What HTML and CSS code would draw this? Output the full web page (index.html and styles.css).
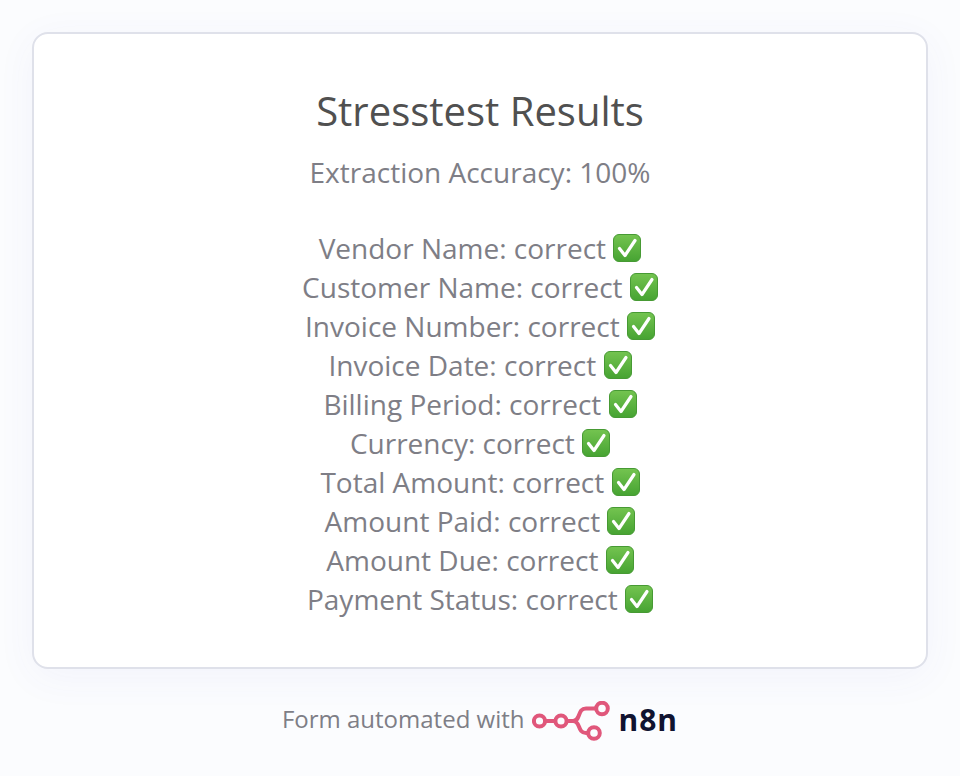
FILE: index.html
```
<!DOCTYPE html>
<html lang="en">
<head>
<meta charset="utf-8">
<title>Stresstest Results</title>
<link rel="stylesheet" href="styles.css">
</head>
<body>
<svg class="defs" width="0" height="0" aria-hidden="true">
  <defs>
    <linearGradient id="g" x1="0" y1="0" x2="0" y2="1">
      <stop offset="0" stop-color="#74c450"/>
      <stop offset="1" stop-color="#46a332"/>
    </linearGradient>
    <symbol id="check" viewBox="0 0 28 28">
      <rect x="0.5" y="0.5" width="27" height="27" rx="5.5" fill="url(#g)" stroke="#479a34"/>
      <path d="M6.5 14.5 L12 21.5 L22 6.5" fill="none" stroke="#fff" stroke-width="3.2" stroke-linecap="round" stroke-linejoin="round"/>
    </symbol>
  </defs>
</svg>
<main class="card">
  <h1 class="title">Stresstest Results</h1>
  <p class="accuracy">Extraction Accuracy: 100%</p>
  <ul class="results">
    <li>Vendor Name: correct <svg class="ok"><use href="#check"/></svg></li>
    <li>Customer Name: correct <svg class="ok"><use href="#check"/></svg></li>
    <li>Invoice Number: correct <svg class="ok"><use href="#check"/></svg></li>
    <li>Invoice Date: correct <svg class="ok"><use href="#check"/></svg></li>
    <li>Billing Period: correct <svg class="ok"><use href="#check"/></svg></li>
    <li>Currency: correct <svg class="ok"><use href="#check"/></svg></li>
    <li>Total Amount: correct <svg class="ok"><use href="#check"/></svg></li>
    <li>Amount Paid: correct <svg class="ok"><use href="#check"/></svg></li>
    <li>Amount Due: correct <svg class="ok"><use href="#check"/></svg></li>
    <li>Payment Status: correct <svg class="ok"><use href="#check"/></svg></li>
  </ul>
</main>
<footer class="foot">
  <span class="foot-text">Form automated with</span>
  <svg class="logo" viewBox="0 0 80 40" aria-hidden="true">
    <g fill="none" stroke="#e0577b" stroke-width="4">
      <circle cx="7.5" cy="20" r="5.6"/>
      <circle cx="29" cy="20" r="5.6"/>
      <circle cx="70" cy="7.5" r="5.8"/>
      <circle cx="62" cy="32" r="5.8"/>
      <path d="M13 20 H23.5 M34.5 20 H41 C49 20 45 7.5 54 7.5 H64.5 M41 20 C49 20 45 32 54 32 H56.5"/>
    </g>
  </svg>
  <span class="brand">n8n</span>
</footer>
</body>
</html>
```
FILE: styles.css
```
* { box-sizing: border-box; }
html, body { height: 100%; }
body {
  margin: 0;
  padding: 32px 32px 0;
  background: #fbfcfe;
  font-family: "Open Sans", sans-serif;
  display: flex;
  flex-direction: column;
  overflow: hidden;
}
.defs { position: absolute; }
.card {
  height: 637px;
  background: #fff;
  border: 2px solid #dfe1ea;
  border-radius: 16px;
  box-shadow: 0 8px 40px rgba(80, 70, 200, 0.05);
  padding: 50px 24px 0;
  text-align: center;
}
.title {
  margin: 0;
  font-size: 40px;
  line-height: 54px;
  font-weight: 400;
  color: #505050;
}
.accuracy {
  margin: 15px 0 0;
  font-size: 28px;
  line-height: 39px;
  color: #7e7e86;
}
.results {
  list-style: none;
  margin: 37px 0 0;
  padding: 0;
  font-size: 28px;
  line-height: 39px;
  color: #7e7e86;
}
.results li { height: 39px; }
.ok {
  width: 28px;
  height: 28px;
  vertical-align: -3px;
}
.foot {
  margin-top: 32px;
  display: flex;
  justify-content: center;
  align-items: center;
  height: 40px;
  gap: 8px;
}
.foot-text {
  font-size: 24px;
  line-height: 36px;
  margin-bottom: 4px;
  color: #7e7e86;
}
.logo { width: 80px; height: 40px; }
.brand {
  font-size: 30px;
  line-height: 40px;
  margin-bottom: 2px;
  font-weight: 700;
  color: #101330;
  margin-left: -2px;
  letter-spacing: 1px;
}
```
